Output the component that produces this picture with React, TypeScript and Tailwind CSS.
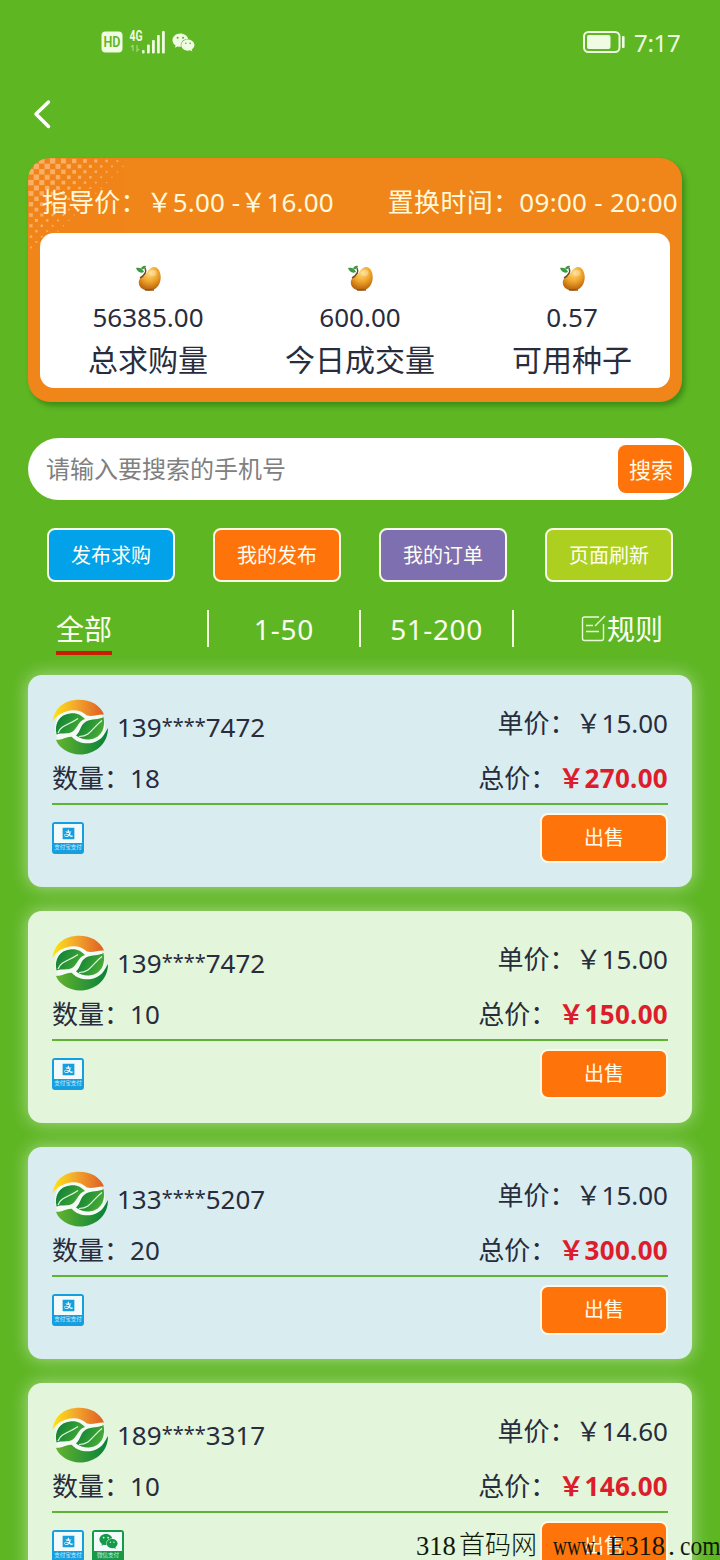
import clsx from "clsx";
import { FaWeixin } from "react-icons/fa";
import { AiFillAlipaySquare } from "react-icons/ai";

type Order = {
  phone: string;
  count: number;
  price: string;
  total: string;
  wechat?: boolean;
};

const orders: Order[] = [
  { phone: "139****7472", count: 18, price: "15.00", total: "270.00" },
  { phone: "139****7472", count: 10, price: "15.00", total: "150.00" },
  { phone: "133****5207", count: 20, price: "15.00", total: "300.00" },
  { phone: "189****3317", count: 10, price: "14.60", total: "146.00", wechat: true },
];

const stats = [
  { value: "56385.00", label: "总求购量" },
  { value: "600.00", label: "今日成交量" },
  { value: "0.57", label: "可用种子" },
];

const actions = [
  { label: "发布求购", color: "bg-[#02a2ea]" },
  { label: "我的发布", color: "bg-[#ff730b]" },
  { label: "我的订单", color: "bg-[#7e70b0]" },
  { label: "页面刷新", color: "bg-[#adcf20]" },
];

function StatusBar() {
  return (
    <div className="flex h-[84px] shrink-0 items-center justify-between pl-[101px] pr-[40px] text-[#effbe2]">
      <div className="flex items-center">
        <svg width="22" height="22" viewBox="0 0 22 22">
          <rect x="0.5" y="0.5" width="21" height="21" rx="4" fill="currentColor" />
          <text x="11" y="16" textAnchor="middle" fontSize="14" fontWeight="600" fill="#5eb623" textLength="17" lengthAdjust="spacingAndGlyphs" fontFamily="Roboto, sans-serif">HD</text>
        </svg>
        <svg className="ml-[6px]" width="38" height="26" viewBox="0 0 38 26" fill="currentColor">
          <text x="0.5" y="11.500" fontSize="14" fontWeight="700" textLength="13" lengthAdjust="spacingAndGlyphs" fontFamily="Roboto, sans-serif">4G</text>
          <path d="M4 16v6M2 18l2-2M8 16v6l2-2" stroke="currentColor" strokeWidth="1.3" fill="none" opacity="0.45" />
          <rect x="13" y="21" width="2.6" height="3.5" rx="1" />
          <rect x="18" y="15.5" width="2.8" height="9" rx="1" />
          <rect x="23" y="11" width="2.8" height="13.5" rx="1" />
          <rect x="28" y="6" width="2.8" height="18.5" rx="1" />
          <rect x="33" y="2" width="2.8" height="22.5" rx="1" />
        </svg>
        <FaWeixin className="ml-[5px] size-[23px]" />
      </div>
      <div className="flex items-center gap-[9px]">
        <svg width="42" height="22" viewBox="0 0 42 22">
          <rect x="1" y="1" width="35.5" height="20" rx="4.5" fill="none" stroke="currentColor" strokeWidth="2" />
          <rect x="4" y="4" width="23.5" height="14" rx="2" fill="currentColor" />
          <rect x="39" y="5" width="2.6" height="12" rx="1" fill="currentColor" />
        </svg>
        <span className="w-[46px] pt-px text-[24px] leading-none tracking-[-0.3px]">7:17</span>
      </div>
    </div>
  );
}

// halftone corner, squares get smaller towards the diagonal
function Halftone() {
  const cells = [];
  for (let row = 0; row < 17; row++) {
    for (let col = 0; col < 18; col++) {
      if ((row + col) % 2) continue;
      const size = Math.min(5.4, 6.8 - (row + col) * 0.31);
      if (size < 1) continue;
      const cx = col * 5.4 + 3;
      const cy = row * 5.4 + 3;
      cells.push(<rect key={`${row}-${col}`} x={cx - size / 2} y={cy - size / 2} width={size} height={size} />);
    }
  }
  return (
    <svg className="absolute left-0 top-0" width="110" height="100" fill="#ffc796" opacity="0.65">
      {cells}
    </svg>
  );
}

function Mango() {
  return (
    <svg className="ml-[2px]" width="26" height="27" viewBox="0 0 26 27">
      <defs>
        <radialGradient id="mango" cx="0.5" cy="0.25" r="0.75">
          <stop offset="0" stopColor="#ffdb7c" />
          <stop offset="0.5" stopColor="#f0a52b" />
          <stop offset="1" stopColor="#b45f0b" />
        </radialGradient>
      </defs>
      <path d="M15 3C20 0 25 5 24.7 13C24.4 21 19 25.5 13 25.5C7 25.5 2.5 22 2.8 17C3.2 12 8 12 10 9C11.5 6.5 12.5 4.5 15 3Z" fill="url(#mango)" />
      <path d="M9 9C10 7 10 5 9 3M9 8C8 11 6 12 4 13" stroke="#7a4a16" strokeWidth="1.5" fill="none" />
      <path d="M10 1C8 0 5 2 5 4C7 5 10 3 10 1ZM0 3C2 2 7 3 8 7C4 9 1 6 0 3Z" fill="#3c9a45" />
      <path d="M9 25H18" stroke="#8a4b0e" strokeWidth="1.3" />
      <ellipse cx="17" cy="8" rx="3.5" ry="3" fill="#fff" opacity="0.3" />
    </svg>
  );
}

function LeafLogo() {
  return (
    <svg className="size-14 shrink-0" viewBox="0 0 56 56">
      <defs>
        <linearGradient id="sun" x1="0" x2="1" y1="0" y2="0">
          <stop offset="0" stopColor="#ffe510" />
          <stop offset="0.45" stopColor="#f3a72c" />
          <stop offset="1" stopColor="#df5d24" />
        </linearGradient>
        <linearGradient id="leaf" x1="0" x2="1" y1="0" y2="0.4">
          <stop offset="0" stopColor="#087c36" />
          <stop offset="1" stopColor="#46aa35" />
        </linearGradient>
        <linearGradient id="ground" x1="0" x2="1" y1="0" y2="0">
          <stop offset="0" stopColor="#64b32e" />
          <stop offset="1" stopColor="#07813a" />
        </linearGradient>
      </defs>
      <circle cx="28" cy="29" r="25" fill="#f4fbf4" />
      <path d="M0.5 23C2 9 13 0.8 27 0.8C39 0.8 48 6 52 15.5C46 15 41 18 35 16.5C29 11 22 10 14 12.5C7 15 3 18 0.5 23Z" fill="url(#sun)" />
      <path d="M4.5 35.5C2 24 8 15.500 18 14.500C25 13.500 29 16 33 20C26 22 26 29 20 33C15 35.500 9 33.500 4.500 35.500Z" fill="url(#leaf)" />
      <path d="M51.5 18C53.5 28 50 36 43 39C37 41.5 30 41 24 36.500C29 32 28 26 34 22.500C40 19.500 46 21 51.5 18Z" fill="url(#leaf)" />
      <path d="M6 34C9 26 17 26 26 19.5M27 37.5C39 37 40 29 50 21.5" stroke="#e4f6df" strokeWidth="1.2" fill="none" />
      <path d="M4 41C11 41 16 37 20 38C26 45 38 46 45 42C51 39 53 34 56 29C56 45 43 55.5 28 55.5C17 55.5 7 49 4 41Z" fill="url(#ground)" />
    </svg>
  );
}

function PayBadge({ wechat }: { wechat?: boolean }) {
  return (
    <div
      className={clsx(
        "flex size-8 flex-col items-center rounded-[3px] border-2",
        wechat ? "border-[#149a49] bg-[#149a49]" : "border-[#169fe0] bg-[#169fe0]"
      )}
    >
      <div className="flex h-[19px] w-full shrink-0 items-center justify-center bg-[#f2fbfa]">
        {wechat ? <FaWeixin className="size-[19px] text-[#149a49]" /> : <AiFillAlipaySquare className="size-[15px] text-[#169fe0]" />}
      </div>
      <span className="whitespace-nowrap text-[5.5px] leading-[9px] text-white/80">{wechat ? "微信支付" : "支付宝支付"}</span>
    </div>
  );
}

function OrderCard({ order, blue }: { order: Order; blue: boolean }) {
  return (
    <div
      className={clsx(
        "h-[212px] shrink-0 rounded-[14px] p-6 text-[26px] leading-none text-[#282c3c] shadow-[0_0_18px_rgba(255,255,255,0.5)]",
        blue ? "bg-[#d9edf1]" : "bg-[#e3f5da]"
      )}
    >
      <div className="flex h-14 justify-between">
        <div className="flex items-center">
          <LeafLogo />
          <span className="ml-[9px]">
            {order.phone.slice(0, 3)}
            <span className="align-[4px] text-[20px] leading-none">****</span>
            {order.phone.slice(7)}
          </span>
        </div>
        <div className="flex h-12 items-center">
          <span>单价：</span>
          <span>￥{order.price}</span>
        </div>
      </div>
      <div className="flex h-[50px] items-center justify-between border-b-2 border-[#5fb336] pb-[2px]">
        <span>数量：{order.count}</span>
        <div className="flex items-center">
          <span className="mr-[2px]">总价：</span>
          <span className="font-bold tracking-[0.3px] text-[#dd1c2c]">￥{order.total}</span>
        </div>
      </div>
      <div className="flex justify-between pt-2">
        <div className="flex gap-2 pt-[9px]">
          <PayBadge />
          {order.wechat && <PayBadge wechat />}
        </div>
        <button className="h-[50px] w-32 rounded-lg border-2 border-[#fdf8e8] bg-[#ff730b] text-[20px] leading-none text-[#fffbe8]">出售</button>
      </div>
    </div>
  );
}

export default function App() {
  return (
    <div className="relative flex h-[1560px] w-[720px] flex-col overflow-hidden bg-[#5eb623] font-['Noto_Sans','Noto_Sans_CJK_SC',sans-serif]">
      <StatusBar />

      {/* Nav */}
      <div className="h-[74px] shrink-0 pl-[33px] pt-[15px]">
        <svg width="18" height="30" viewBox="0 0 18 30" fill="none" stroke="#fff" strokeWidth="3.5" strokeLinecap="round" strokeLinejoin="round">
          <path d="M15.5 3L3 15L15.5 27.5" />
        </svg>
      </div>

      {/* Price panel */}
      <div className="relative ml-7 h-[244px] w-[654px] shrink-0 rounded-[22px] bg-[#f08519] shadow-[3px_4px_5px_rgba(0,70,0,0.35)]">
        <div className="absolute inset-0 overflow-hidden rounded-[22px]">
          <Halftone />
        </div>
        <div className="relative flex h-[75px] items-center justify-between whitespace-nowrap pl-[14px] pr-[4px] pt-[12px] text-[26px] leading-none text-[#fff9dc]">
          <span className="tracking-[0.15px]">指导价：￥5.00 -￥16.00</span>
          <span className="tracking-[0.3px]">置换时间：09:00 - 20:00</span>
        </div>
        <div className="relative ml-3 h-[155px] w-[630px] rounded-[14px] bg-white text-[#282c3c]">
          <div className="ml-[2px] grid w-[636px] grid-cols-3 pt-[32px]">
            {stats.map((stat) => (
              <div key={stat.label} className="flex flex-col items-center">
                <Mango />
                <span className="mt-[12px] text-[26px] leading-[26px]">{stat.value}</span>
                <span className="mt-[14px] text-[30px] leading-[32px]">{stat.label}</span>
              </div>
            ))}
          </div>
        </div>
      </div>

      {/* Search */}
      <div className="mx-7 mt-9 flex h-[62px] shrink-0 items-center justify-between rounded-full bg-white pl-[18px] pr-2">
        <span className="text-[24px] leading-none text-[#808080]">请输入要搜索的手机号</span>
        <button className="h-12 w-[66px] rounded-lg bg-[#ff730b] text-[22px] leading-none text-[#fffbe8]">搜索</button>
      </div>

      {/* Actions */}
      <div className="mx-7 mt-7 grid shrink-0 grid-cols-4 justify-items-center">
        {actions.map((action) => (
          <button
            key={action.label}
            className={clsx("h-[54px] w-32 rounded-lg border-2 border-[#f7fbe8] pt-[2px] text-[20px] leading-none text-[#fffef2]", action.color)}
          >
            {action.label}
          </button>
        ))}
      </div>

      {/* Tabs */}
      <div className="mt-7 flex h-[65px] shrink-0 items-start text-[28px] leading-[38px] text-[#fbfff0]">
        <div className="w-[207px] pl-14">
          <span className="inline-block h-[45px] border-b-4 border-[#c81e00]">全部</span>
        </div>
        <div className="h-[37px] w-[152px] border-l-2 border-[#f3ffdf] text-center tracking-[0.8px]">1-50</div>
        <div className="h-[37px] w-[153px] border-l-2 border-[#f3ffdf] text-center tracking-[0.6px]">51-200</div>
        <div className="flex h-[37px] w-[208px] items-start border-l-2 border-[#f3ffdf] pl-[67px]">
          <svg className="mr-px mt-[4px]" width="25" height="28" viewBox="0 0 25 28" fill="none" stroke="#e9fbd5" strokeWidth="1.4">
            <path d="M18 3H3.5Q1.5 3 1.5 5V24.5Q1.5 26.5 3.5 26.5H20.5Q22.5 26.5 22.5 24.5V10M24 2L14 12M5 11.5H12M5 17.5H18" />
          </svg>
          <span>规则</span>
        </div>
      </div>

      {/* Orders */}
      <div className="mx-7 flex flex-col gap-6">
        {orders.map((order, i) => (
          <OrderCard key={i} order={order} blue={i % 2 === 0} />
        ))}
      </div>

      {/* Site mark over the last card */}
      <div className="absolute bottom-0 left-[416px] flex h-7 items-center whitespace-nowrap font-['Liberation_Serif','Noto_Sans_CJK_SC',serif] text-[28px] leading-none text-[#101808]">
        <span className="w-[43px] origin-left scale-x-[0.95]">318</span>
        <span className="w-[94px] text-[26px] font-light">首码网</span>
        <span className="w-[42px] origin-left scale-x-[0.69]">www</span>
        <span className="w-[14px]">.</span>
        <span className="w-[59px] origin-left scale-x-[0.95]">E318</span>
        <span className="w-[12px]">.</span>
        <span className="w-[40px] origin-left scale-x-[0.84]">com</span>
      </div>
    </div>
  );
}
